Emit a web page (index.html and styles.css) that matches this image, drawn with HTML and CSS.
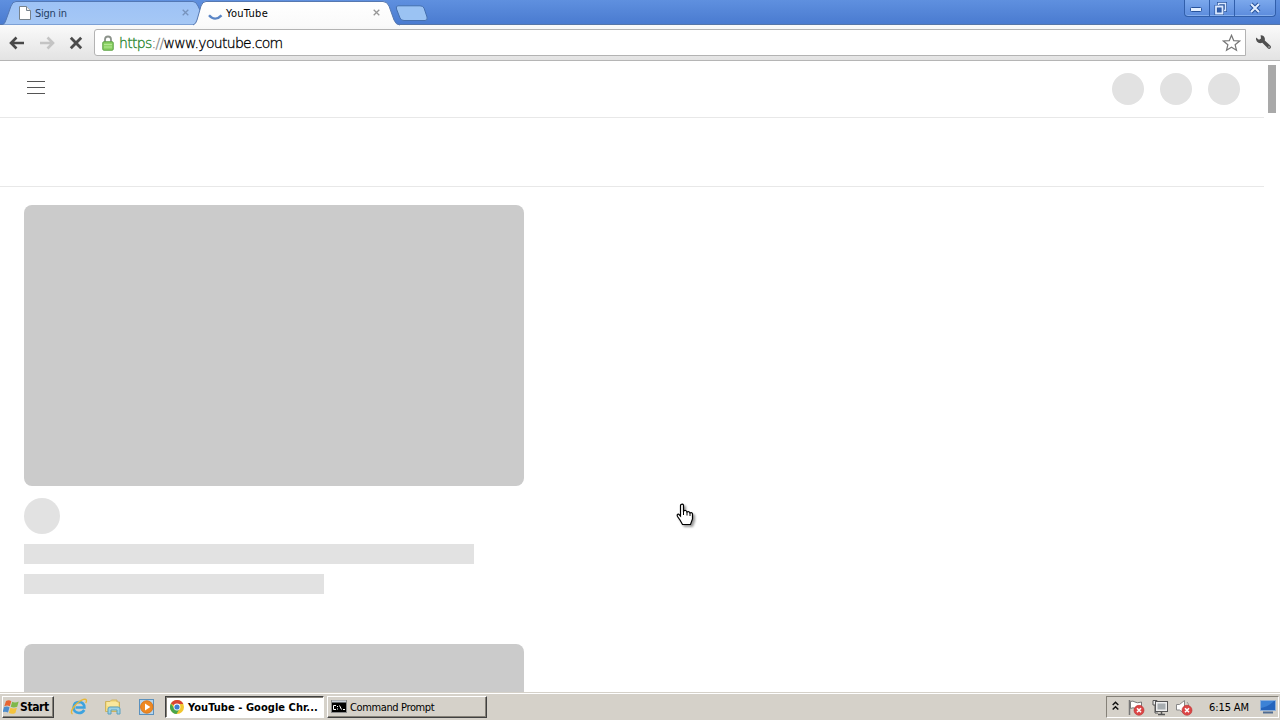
FILE: index.html
```
<!DOCTYPE html>
<html lang="en">
<head>
    <meta charset="UTF-8">
    <meta name="viewport" content="width=device-width, initial-scale=1.0">
    <title>YouTube</title>
    <link rel="stylesheet" href="styles.css">
</head>
<body>
    <div class="tabstrip">
        <div class="tab tab-first">
            <svg class="tab-shape" width="202" height="25" viewBox="0 0 202 25">
                <path d="M0 25 Q3 24 4 20 L9 6 Q10.5 1.5 14 1.5 H191 Q194 1.5 196 6 L202 19 V25Z" fill="url(#inactive)" stroke="#5378b5"/>
                <defs>
                    <linearGradient id="inactive" x1="0" y1="0" x2="0" y2="1">
                        <stop offset="0" stop-color="#9dc2f6"/>
                        <stop offset="1" stop-color="#a6c8f5"/>
                    </linearGradient>
                </defs>
            </svg>
            <svg class="tab-icon" width="12" height="14" viewBox="0 0 12 14">
                <path d="M.5 .5H7.5L11.5 4.5V13.5H.5Z" fill="#fff" stroke="#77828c"/>
                <path d="M7.5 .5V4.5H11.5" fill="#eee" stroke="#77828c"/>
            </svg>
            <span class="tab-title">Sign in</span>
            <svg class="tab-close" width="7" height="7" viewBox="0 0 7 7"><path d="M.7 .7L6.3 6.3M6.3 .7L.7 6.3" stroke="#7793bd" stroke-width="1.3"/></svg>
        </div>
        <div class="tab tab-active">
            <svg class="tab-shape" width="212" height="26" viewBox="0 0 212 26">
                <path d="M0 25 Q3 24 4 20 L8 6 Q9.5 1.5 13 1.5 H190 Q194 1.5 196 6 L201 20 Q203 25 207 25 V26H0Z" fill="url(#active)"/>
                <path d="M0 25 Q3 24 4 20 L8 6 Q9.5 1.5 13 1.5 H190 Q194 1.5 196 6 L201 20 Q203 25 207 25" fill="none" stroke="#5678b0"/>
                <defs>
                    <linearGradient id="active" x1="0" y1="0" x2="0" y2="1">
                        <stop offset="0" stop-color="#fff"/>
                        <stop offset="1" stop-color="#fafafa"/>
                    </linearGradient>
                </defs>
            </svg>
            <svg class="tab-icon" width="16" height="16" viewBox="0 0 16 16">
                <path d="M1 10.3Q7 17 13.5 10.3" fill="none" stroke="#5b86c6" stroke-width="2.4"/>
            </svg>
            <span class="tab-title">YouTube</span>
            <svg class="tab-close" width="7" height="7" viewBox="0 0 7 7"><path d="M.7 .7L6.3 6.3M6.3 .7L.7 6.3" stroke="#979797" stroke-width="1.3"/></svg>
        </div>
        <svg class="new-tab" width="34" height="17" viewBox="0 0 34 17">
            <path d="M3 .8H25Q28 .8 29 3L32 12Q33 15.5 30 15.5H9Q6 15.5 5 13L1.5 4Q.5 .8 3 .8Z" fill="#9bc3f3" stroke="#456fae"/>
        </svg>
        <div class="window-buttons">
            <span class="window-btn"><svg width="12" height="6" viewBox="0 0 12 6"><rect x=".5" y=".5" width="11" height="4" rx="1" fill="#e3efff" stroke="#27539c"/></svg></span>
            <span class="window-btn window-restore"><svg width="13" height="13" viewBox="0 0 13 13"><path d="M4.5 1.5H11.5V8.5H4.5Z" fill="none" stroke="#27539c" stroke-width="3"/><path d="M4.5 1.5H11.5V8.5H4.5Z" fill="none" stroke="#dbe9ff" stroke-width="1.5"/><path d="M2 4.5H8.5V11.5H2Z" fill="#315eaa" stroke="#27539c" stroke-width="3"/><path d="M2 4.5H8.5V11.5H2Z" fill="none" stroke="#dbe9ff" stroke-width="1.8"/></svg></span>
            <span class="window-btn window-close"><svg width="12" height="12" viewBox="0 0 12 12"><path d="M2 2L10 10M10 2L2 10" stroke="#27539c" stroke-width="4"/><path d="M2 2L10 10M10 2L2 10" stroke="#e3efff" stroke-width="2"/></svg></span>
        </div>
    </div>

    <div class="toolbar">
        <div class="nav-buttons">
            <svg width="16" height="14" viewBox="0 0 16 14"><path d="M7.5 1.5L2 7L7.5 12.5M2 7H15" fill="none" stroke="#484848" stroke-width="2.6"/></svg>
            <svg width="16" height="14" viewBox="0 0 16 14"><path d="M8.5 1.5L14 7L8.5 12.5M14 7H1" fill="none" stroke="#c4c4c4" stroke-width="2.6"/></svg>
            <svg width="14" height="14" viewBox="0 0 14 14"><path d="M1.8 1.8L12.2 12.2M12.2 1.8L1.8 12.2" stroke="#4b4b4b" stroke-width="2.8"/></svg>
        </div>
        <div class="omnibox">
            <svg class="lock" width="12" height="16" viewBox="0 0 12 16">
                <path d="M3 8V4.5Q3 1.5 6 1.5T9 4.5V8" fill="none" stroke="#8b928a" stroke-width="1.8"/>
                <rect x=".8" y="6.8" width="10.4" height="8.4" rx="1" fill="#8ed466" stroke="#579e40"/>
                <path d="M2 9.5H10M2 12H10" stroke="#b4e795"/>
            </svg>
            <span class="url"><span class="scheme">https</span><span class="slashes">://</span>www.youtube.com</span>
            <svg class="star" width="19" height="18" viewBox="0 0 19 18"><path d="M9.5 1.3L11.7 6.6L17.6 7L13.1 10.7L14.5 16.3L9.5 13.3L4.5 16.3L5.9 10.7L1.4 7L7.3 6.6Z" fill="#fff" stroke="#777" stroke-width="1.2"/></svg>
        </div>
        <svg class="wrench" width="17" height="17" viewBox="0 0 17 17">
            <path d="M1 3.5L4 5.8L6 4.5L5.6 1.2Q9 1 9.8 4.2Q10 5.4 9.8 6.4L15.5 11.8Q16.6 13 15.5 14.3Q14.2 15.5 13 14.5L7.3 8.8Q3.8 10 1.9 7.4Q.6 5.5 1 3.5Z" fill="#505050"/>
            <circle cx="14" cy="13" r=".7" fill="#ddd"/>
        </svg>
    </div>

    <main class="viewport">
        <div class="page">
            <header class="masthead">
                <svg width="18" height="14" viewBox="0 0 18 14"><path d="M0 .5H18M0 6.5H18M0 12.5H18" stroke="#555"/></svg>
                <div class="masthead-icons">
                    <span class="dot"></span>
                    <span class="dot"></span>
                    <span class="dot"></span>
                </div>
            </header>
            <div class="chips-bar"></div>
            <section class="feed">
                <article class="video">
                    <div class="thumbnail"></div>
                    <div class="avatar"></div>
                    <div class="line line-title"></div>
                    <div class="line line-meta"></div>
                </article>
                <article class="video">
                    <div class="thumbnail"></div>
                </article>
            </section>
        </div>
        <div class="scrollbar"><div class="scroll-thumb"></div></div>
    </main>

    <footer class="taskbar">
        <div class="start">
            <svg width="17" height="16" viewBox="0 0 17 16">
                <path d="M3 2Q6 .5 8.3 2.2L6.8 7.3Q4.5 5.8 1.3 7.2Z" fill="#e86531"/>
                <path d="M9.2 2.7Q12 4.2 15.7 2.4L14.2 7.7Q10.8 9.3 7.7 7.8Z" fill="#7fb84a"/>
                <path d="M1.1 8Q4.2 6.8 6.5 8.3L5 13.5Q2.5 12-.4 13.1Z" fill="#4e8dcc"/>
                <path d="M7.4 8.8Q10.5 10.3 13.9 8.7L12.4 13.9Q9 15.6 5.9 14Z" fill="#f4c33d"/>
            </svg>
            <span>Start</span>
        </div>
        <div class="quick-launch">
            <svg width="18" height="18" viewBox="0 0 18 18">
                <path d="M14.3 12Q12.5 15 9 15Q3.5 14.5 3.5 9.3Q4 4 9 4Q14.2 4.2 14.4 9.4H5.5" fill="none" stroke="#3da3df" stroke-width="2.5"/>
                <path d="M2.5 16Q-.5 14.5 4.5 8Q9 2.8 13.5 1.4Q18 .4 15.8 5" fill="none" stroke="#e6b737" stroke-width="1.4"/>
            </svg>
            <svg width="18" height="18" viewBox="0 0 18 18">
                <path d="M1.5 3.5H6L7.5 2H13V4H15.5V13.5H1.5Z" fill="#f3dc83" stroke="#cfb35e"/>
                <path d="M3 5H14M3 7H14" stroke="#fff3b7"/>
                <path d="M4 16V11Q4 9 6 9H14Q16 9 16 11V16H13V12H7V16Z" fill="#9bd2e6" stroke="#5ba0bd"/>
            </svg>
            <svg width="18" height="18" viewBox="0 0 18 18">
                <rect x="1.5" y="1.5" width="14" height="15" fill="#b5d5ed" stroke="#5b91bd"/>
                <circle cx="8.8" cy="9" r="6.2" fill="#ef8921" stroke="#d7771e"/>
                <path d="M7 5.5L12.3 9L7 12.5Z" fill="#fff"/>
            </svg>
        </div>
        <div class="task task-active">
            <svg width="16" height="16" viewBox="0 0 16 16">
                <circle cx="8" cy="8" r="7" fill="#f2c72f"/>
                <path d="M8 8L1.9 4.5A7 7 0 0 1 14.3 5H8Z" fill="#d94535"/>
                <path d="M1.9 4.5A7 7 0 0 0 7.5 15L10.5 10L5 9Z" fill="#48a54b"/>
                <circle cx="8" cy="8" r="3.4" fill="#fff"/>
                <circle cx="8" cy="8" r="2.6" fill="#3f7ed0"/>
            </svg>
            <span>YouTube - Google Chr...</span>
        </div>
        <div class="task task-prompt">
            <svg width="16" height="14" viewBox="0 0 16 14">
                <rect x=".5" y=".5" width="15" height="12" fill="#000" stroke="#888"/>
                <path d="M1 1.5H15" stroke="#c9d0d8" stroke-width="2"/>
                <path d="M5 5.5H2.5V9.5H5M6.5 6V7M6.5 8.5V9.5M8.5 5.5L10.5 9.5M12 9.5H14" fill="none" stroke="#fff"/>
            </svg>
            <span>Command Prompt</span>
        </div>
        <div class="tray">
            <svg class="chevrons" width="7" height="10" viewBox="0 0 7 10"><path d="M.7 4L3.5 1.2L6.3 4M.7 8.5L3.5 5.7L6.3 8.5" fill="none" stroke="#111" stroke-width="1.5"/></svg>
            <svg width="18" height="17" viewBox="0 0 18 17">
                <path d="M2.5 1V16" stroke="#777" stroke-width="1.5"/>
                <path d="M3.5 2.5Q6 1.5 8 3T14.5 3V10Q11 11 8.5 9.5T3.5 9.5Z" fill="#fff" stroke="#777"/>
                <circle cx="12" cy="11.3" r="5" fill="#dc4545" stroke="#b83030" stroke-width=".6"/>
                <path d="M10 9.3L14 13.3M14 9.3L10 13.3" stroke="#fff" stroke-width="1.6"/>
            </svg>
            <svg width="18" height="17" viewBox="0 0 18 17">
                <path d="M2 1.5H6V6H2ZM4 6V14H7" fill="#eee" stroke="#555"/>
                <rect x="5.5" y="3.5" width="10" height="8" fill="#a7adb0" stroke="#eee" stroke-width="2"/>
                <rect x="4.5" y="2.5" width="12" height="10" fill="none" stroke="#555"/>
                <path d="M10.5 12V15M7 15.5H14" stroke="#555" stroke-width="1.5"/>
            </svg>
            <svg width="18" height="17" viewBox="0 0 18 17">
                <path d="M1.5 5.5H4.5L9.5 1.5V14.5L4.5 11H1.5Z" fill="#fff" stroke="#888"/>
                <path d="M12 3Q14 5 13.5 7" fill="none" stroke="#999"/>
                <circle cx="12" cy="11.3" r="5" fill="#dc4545" stroke="#b83030" stroke-width=".6"/>
                <path d="M10 9.3L14 13.3M14 9.3L10 13.3" stroke="#fff" stroke-width="1.6"/>
            </svg>
            <span class="clock">6:15 AM</span>
            <svg class="desktop" width="16" height="14" viewBox="0 0 16 14">
                <path d="M.5 .5H15.5V10.5H.5Z" fill="#2464bd" stroke="#8cafda"/>
                <path d="M1 8Q8 7 14 1H1Z" fill="#3c82d6"/>
                <path d="M3 12.5H13" stroke="#506c92" stroke-width="2"/>
            </svg>
        </div>
    </footer>

    <svg class="cursor" width="24" height="26" viewBox="0 0 24 26">
        <path d="M5 1.5Q6.5 .5 7.5 2V8Q10 6.5 11 9Q13 8 14 10Q16 9 16.5 11V16L14.5 21.5H6.5L4 17L1.5 13.5Q.5 11 2.5 11L4.5 13V2.5Z" fill="#fff" stroke="#000" stroke-width="1.2"/>
        <path d="M7.5 8V12M11 9V12.5M14 10V13" stroke="#000"/>
    </svg>
</body>
</html>
```
FILE: styles.css
```
* {
    margin: 0;
    padding: 0;
    box-sizing: border-box;
}

body {
    width: 1280px;
    height: 720px;
    display: flex;
    flex-direction: column;
    overflow: hidden;
    background: #fff;
    color: #000;
    font-family: "DejaVu Sans Condensed", "DejaVu Sans", sans-serif;
    font-size: 11px;
}

svg {
    display: block;
    flex: none;
}

/* Tab strip */
.tabstrip {
    height: 25px;
    flex: none;
    display: flex;
    background: linear-gradient(#5f90df, #4a7bd0);
    border-bottom: 1px solid #5676a8;
}

.tab {
    position: relative;
    height: 25px;
    display: flex;
    align-items: center;
}

.tab-first {
    width: 195px;
    margin-left: 2px;
    padding: 0 8px 0 17px;
    color: #243e63;
}

.tab-active {
    width: 198px;
    padding: 0 15px 0 11px;
}

.tab-shape {
    position: absolute;
    left: 0;
    top: 0;
}

.tab-active .tab-shape {
    left: -4px;
}

.tab-icon,
.tab-title,
.tab-close {
    position: relative;
}

.tab-title {
    margin-left: 4px;
    margin-top: 1px;
    flex: 1;
    font-size: 11px;
    letter-spacing: -0.3px;
}

.tab-active .tab-title {
    margin-left: 2px;
    letter-spacing: 0.3px;
}

.new-tab {
    margin: 5px 0 0;
}

.window-buttons {
    display: flex;
    height: 17px;
    margin-left: auto;
    margin-right: 4px;
    border: 1px solid #315fab;
    border-top: 0;
    border-radius: 0 0 4px 4px;
    background: linear-gradient(#7ba8ec, #5c8cdd);
    box-shadow: inset 0 -1px #83adec;
}

.window-btn {
    width: 25px;
    display: flex;
    align-items: center;
    justify-content: center;
    border-right: 1px solid #315fab;
}

.window-btn:first-child {
    padding-top: 4px;
    padding-right: 2px;
}

.window-restore {
    padding-right: 3px;
}

.window-close {
    width: 40px;
    border-right: 0;
}

/* Toolbar */
.toolbar {
    height: 36px;
    flex: none;
    display: flex;
    align-items: center;
    background: linear-gradient(#fafafa, #e3e3e3);
    border-bottom: 1px solid #b5b5b5;
}

.nav-buttons {
    width: 94px;
    display: flex;
    gap: 14px;
    padding-left: 9px;
}

.omnibox {
    width: 1152px;
    height: 27px;
    display: flex;
    align-items: center;
    padding: 0 4px 0 7px;
    background: #fff;
    border: 1px solid #b3b3b3;
    border-radius: 3px 0 0 3px;
}

.url {
    flex: 1;
    margin-left: 5px;
    font-family: "DejaVu Sans", sans-serif;
    font-weight: 200;
    font-size: 14px;
    letter-spacing: -0.7px;
    -webkit-text-stroke: 0.3px;
}

.scheme {
    color: #25842b;
}

.slashes {
    color: #888;
}

.wrench {
    margin-left: 9px;
}

/* Page */
.viewport {
    flex: 1;
    min-height: 0;
    display: flex;
    overflow: hidden;
}

.page {
    width: 1264px;
}

.masthead {
    height: 57px;
    display: flex;
    align-items: center;
    justify-content: space-between;
    padding: 0 24px 0 27px;
    border-bottom: 1px solid #e8e8e8;
}

.masthead > svg {
    margin-bottom: 2px;
}

.masthead-icons {
    display: flex;
    gap: 16px;
}

.dot {
    width: 32px;
    height: 32px;
    border-radius: 50%;
    background: #e2e2e2;
}

.chips-bar {
    height: 69px;
    border-bottom: 1px solid #e8e8e8;
}

.feed {
    padding: 18px 24px 0;
}

.video {
    width: 500px;
    margin-bottom: 50px;
}

.thumbnail {
    height: 281px;
    border-radius: 8px;
    background: #cbcbcb;
}

.avatar {
    width: 36px;
    height: 36px;
    margin: 12px 0 10px;
    border-radius: 50%;
    background: #e2e2e2;
}

.line {
    height: 20px;
    background: #e2e2e2;
}

.line-title {
    width: 450px;
}

.line-meta {
    width: 300px;
    margin-top: 10px;
}

.scrollbar {
    width: 16px;
    padding: 4px 0 0 4px;
}

.scroll-thumb {
    width: 8px;
    height: 48px;
    background: #a9a9a9;
}

/* Taskbar */
.taskbar {
    height: 28px;
    flex: none;
    display: flex;
    align-items: center;
    padding-top: 1px;
    background: #d5d1c9;
    border-top: 1px solid #d5d1c9;
    box-shadow: inset 0 1px #fff;
}

.start,
.task {
    height: 22px;
    display: flex;
    align-items: center;
    border: 1px solid;
    border-color: #fff #404040 #404040 #fff;
    box-shadow: inset -1px -1px #858178;
}

.start {
    width: 52px;
    margin-left: 2px;
    font-weight: bold;
    font-size: 12px;
    letter-spacing: -0.4px;
}

.quick-launch {
    width: 111px;
    display: flex;
    gap: 16px;
    padding-left: 16px;
}

.task-active {
    width: 159px;
    padding-left: 3px;
    font-weight: bold;
    letter-spacing: 0.05px;
    background: #fff;
    border-color: #404040 #fff #fff #404040;
    box-shadow: inset 1px 1px #858178;
}

.task span {
    margin-left: 3px;
    white-space: nowrap;
}

.task-prompt {
    width: 160px;
    margin-left: 3px;
    padding-left: 3px;
    letter-spacing: -0.37px;
}

.tray {
    width: 173px;
    height: 22px;
    display: flex;
    align-items: center;
    gap: 6px;
    margin-left: auto;
    margin-right: 1px;
    padding-left: 5px;
    border: 1px solid;
    border-color: #858178 #fff #fff #858178;
}

.chevrons {
    margin-right: 2px;
    margin-bottom: 3px;
}

.clock {
    margin-left: 10px;
    white-space: nowrap;
    letter-spacing: -0.1px;
}

.desktop {
    margin-left: auto;
    margin-right: 2px;
}

/* Mouse pointer */
.cursor {
    position: absolute;
    left: 676px;
    top: 503px;
    filter: drop-shadow(2px 2px 1px rgba(0, 0, 0, 0.4));
}
```
